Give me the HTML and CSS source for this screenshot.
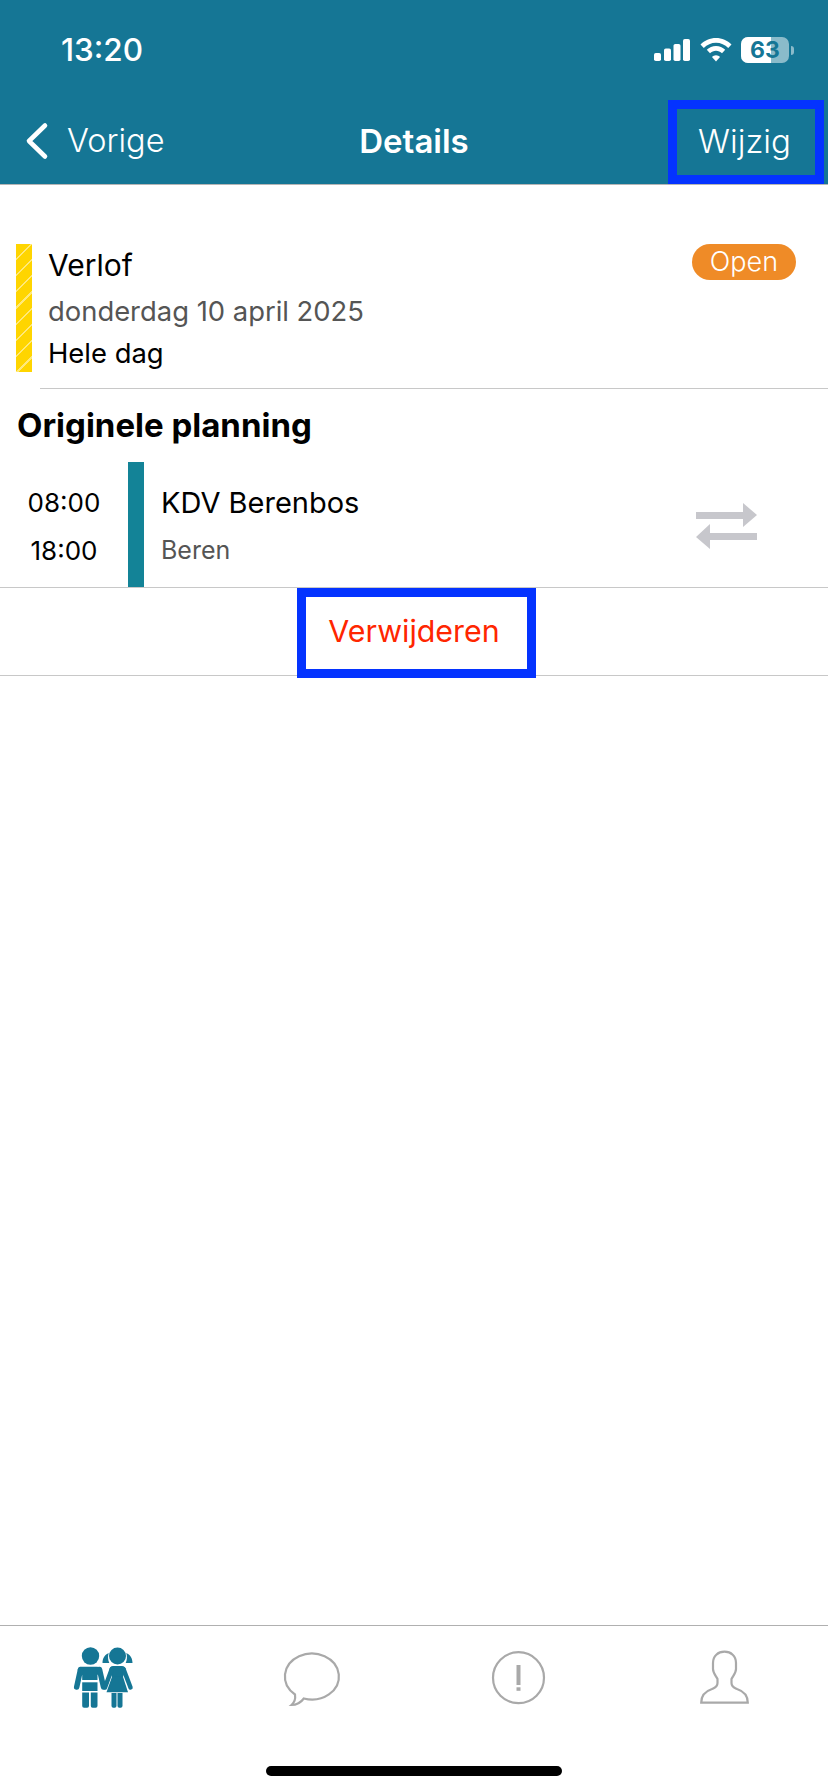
FILE: index.html
```html
<!DOCTYPE html>
<html lang="nl">
<head>
<meta charset="utf-8">
<title>Details</title>
<link rel="stylesheet" href="styles.css">
</head>
<body>
<div class="app">
  <header class="top">
    <div class="status">
      <span class="clock">13:20</span>
      <div class="status-icons">
        <svg class="signal" width="36" height="22" viewBox="0 0 36 22"><rect x="0" y="14" width="7" height="8" rx="1.8"/><rect x="10" y="9.500" width="7" height="12.500" rx="1.8"/><rect x="19.500" y="5" width="7" height="17" rx="1.8"/><rect x="29" y="0" width="7" height="22" rx="1.8"/></svg>
        <svg class="wifi" width="32" height="24" viewBox="0 0 32 24"><path d="M16 0C10 0 4.500 2.400.5 6.500L3.800 10C7 6.800 11.300 4.800 16 4.800S25 6.800 28.200 10L31.500 6.500C27.500 2.400 22 0 16 0Z"/><path d="M16 8C12.500 8 9.200 9.400 6.800 11.800L10 15.200C11.600 13.700 13.700 12.800 16 12.800S20.400 13.700 22 15.200L25.200 11.800C22.800 9.400 19.500 8 16 8Z"/><path d="M16 23.500L12 19C13 18 14.400 17.300 16 17.300S19 18 20 19Z"/></svg>
        <div class="battery"><span class="battery-fill"></span><span class="battery-num">63</span></div>
        <span class="battery-nub"></span>
      </div>
    </div>
    <nav class="nav">
      <a class="back">
        <svg width="26" height="38" viewBox="0 0 26 38"><path d="M22 3.500 L6 19 L22 34.500" fill="none" stroke="#fff" stroke-width="4.600" stroke-linecap="round" stroke-linejoin="round"/></svg>
        <span>Vorige</span>
      </a>
      <h1 class="nav-title">Details</h1>
      <a class="edit">Wijzig</a>
    </nav>
  </header>

  <main class="content">
    <section class="leave">
      <div class="stripe"></div>
      <div class="leave-text">
        <div class="leave-title">Verlof</div>
        <div class="leave-date">donderdag 10 april 2025</div>
        <div class="leave-span">Hele dag</div>
      </div>
      <span class="pill">Open</span>
    </section>
    <hr class="rule">
    <h2 class="section-title">Originele planning</h2>
    <section class="shift">
      <div class="times"><span>08:00</span><span>18:00</span></div>
      <div class="bar"></div>
      <div class="shift-text">
        <span class="shift-place">KDV Berenbos</span>
        <span class="shift-group">Beren</span>
      </div>
      <svg class="swap" width="61" height="46" viewBox="0 0 61 46"><path d="M0 9h47V0l14 12-14 12v-8H0z"/><path d="M61 30H14v-9L0 34l14 12v-9h47z"/></svg>
    </section>
    <div class="action"><a class="delete">Verwijderen</a></div>
  </main>

  <footer class="tabs">
    <div class="tab">
      <svg width="80" height="70" viewBox="0 0 80 70">
        <g fill="#157695">
          <circle cx="26.500" cy="11" r="8.700"/>
          <circle cx="53.500" cy="11" r="8.500"/>
          <path d="M38.500 18C38.500 13 41 9.500 44.700 8C43.700 11 43.800 15 45.300 18Z"/>
          <path d="M68.500 18C68.500 13 66 9.500 62.300 8C63.300 11 63.200 15 61.700 18Z"/>
          <path d="M18 21.700H33C36 21.700 37.500 23 38.200 25L33.500 30V35H18.200V30L13.500 25C14.500 23 15.500 21.700 18 21.700Z"/>
          <path d="M18.200 37.300H33.500V46H18.200Z"/>
          <path d="M18.200 47.500H25V60.700A1.900 1.900 0 0 1 23.100 62.700H20.100A1.900 1.900 0 0 1 18.200 60.700Z"/>
          <path d="M26.800 47.500H33.500V60.700A1.900 1.900 0 0 1 31.600 62.700H28.700A1.900 1.900 0 0 1 26.800 60.700Z"/>
          <path d="M49 21H58C60 21 61.500 22.500 61.500 24.500L59 32H48L45.500 24.500C45.500 22.500 47 21 49 21Z"/>
          <path d="M48 31.700L42.500 47.300H64L59 31.700Z"/>
          <path d="M47.500 48H52.500V61A1.800 1.800 0 0 1 50.700 62.700H49.300A1.800 1.800 0 0 1 47.500 61Z"/>
          <path d="M53.500 48H58.500V61A1.800 1.800 0 0 1 56.700 62.700H55.300A1.800 1.800 0 0 1 53.500 61Z"/>
        </g>
        <g fill="none" stroke="#157695" stroke-width="5.500" stroke-linecap="round">
          <path d="M16.500 24.500L12.700 42"/>
          <path d="M35.500 24.500L39.500 42"/>
          <path d="M47.800 24L41 42.500" stroke-width="4.500"/>
          <path d="M59.500 24L66.500 42.500" stroke-width="4.500"/>
        </g>
      </svg>
    </div>
    <div class="tab">
      <svg width="80" height="70" viewBox="0 0 80 70"><path class="tab-line" d="M32.800 53.500A27 23 0 1 0 24 49.500Q25 56 20.500 60Q28 60 32.800 53.500Z"/></svg>
    </div>
    <div class="tab">
      <svg width="80" height="70" viewBox="0 0 80 70"><circle class="tab-line" cx="40.500" cy="32.700" r="25.500"/><rect class="tab-fill" x="38.500" y="20" width="4" height="20"/><rect class="tab-fill" x="38.500" y="42.300" width="4" height="3.500"/></svg>
    </div>
    <div class="tab">
      <svg width="80" height="70" viewBox="0 0 80 70"><path class="tab-line" d="M39.500 6.700C46 6.700 51 11 51 18V24C51 28 48 31 46.500 34V38C46.500 42 49 42.500 52 44C58 46 62.800 50 62.800 57.700H16.200C16.200 50 21 46 27 44C30 42.500 32.500 42 32.500 38V34C31 31 28 28 28 24V18C28 11 33 6.700 39.500 6.700Z"/></svg>
    </div>
    <div class="home-indicator"></div>
  </footer>
</div>
</body>
</html>
```

FILE: styles.css
```css
* { box-sizing: border-box; }
html, body { margin: 0; padding: 0; background: #fff; }
body { font-family: Inter, "Noto Sans", "Liberation Sans", sans-serif; color: #000; }

.app { width: 828px; height: 1792px; display: flex; flex-direction: column; overflow: hidden; }

.top { background: #157695; color: #fff; border-bottom: 1px solid #b5b5b5; height: 185px; }
.status { height: 100px; padding: 0 34px 0 61px; display: flex; align-items: center; justify-content: space-between; }
.clock { font-size: 31.500px; font-weight: 500; line-height: 100px; }
.status-icons { display: flex; align-items: center; }
.signal, .wifi { fill: #fff; display: block; }
.wifi { margin-left: 10px; }
.battery { position: relative; width: 48px; height: 26px; margin-left: 9px; border-radius: 7px; background: rgba(255,255,255,.5); overflow: hidden; text-align: center; font-size: 23px; line-height: 26px; font-weight: 700; color: #157695; }
.battery-fill { position: absolute; left: 0; top: 0; bottom: 0; width: 30px; background: #fff; }
.battery-num { position: relative; }
.battery-nub { width: 3px; height: 9px; margin-left: 2px; border-radius: 0 3px 3px 0; background: rgba(255,255,255,.5); }

.nav { height: 84px; display: grid; grid-template-columns: 1fr auto 1fr; align-items: center; }
.back { display: flex; align-items: center; gap: 18px; padding: 0 0 3px 23px; font-size: 32.500px; font-weight: 300; }
.back svg { display: block; }
.nav-title { margin: 0; padding-bottom: 2px; font-size: 33px; font-weight: 600; line-height: 82px; }
.edit { justify-self: end; width: 156px; height: 84px; margin-right: 4px; padding: 0 3px 3px 0; border: 9px solid #0433ff; display: flex; align-items: center; justify-content: center; font-size: 33px; font-weight: 300; }

.content { flex: 1; }

.leave { display: flex; align-items: stretch; margin-top: 59px; padding-left: 16px; padding-right: 32px; height: 144px; }
.stripe { width: 16px; height: 128px; background: repeating-linear-gradient(135deg, #ffd500 0, #ffd500 10px, #ffe97a 10px, #ffe97a 11.500px); }
.leave-text { flex: 1; padding-left: 17px; }
.leave-title { font-size: 30px; line-height: 40px; padding-top: 1px; margin-left: -1px; }
.leave-date { font-size: 27.400px; line-height: 48px; margin-top: 2px; margin-bottom: 1px; margin-left: -1px; color: #555; }
.leave-span { font-size: 27.400px; line-height: 34px; margin-left: -1px; }
.pill { align-self: flex-start; width: 104px; height: 36px; border-radius: 18px; background: #ef8b27; color: #fff; text-align: center; font-size: 27px; line-height: 36px; font-weight: 300; }

.rule { margin: 0 0 0 40px; height: 1px; border: 0; background: #c8c8c8; }
.section-title { margin: 0; padding: 17px 0 0 17px; height: 73px; font-size: 33px; font-weight: 700; line-height: 38px; }

.shift { display: flex; align-items: stretch; height: 126px; border-bottom: 1px solid #c8c8c8; }
.times { width: 128px; display: flex; flex-direction: column; align-items: center; padding-top: 17px; font-size: 26px; line-height: 48px; }
.bar { width: 16px; background: #138397; }
.shift-text { flex: 1; display: flex; flex-direction: column; padding: 18px 0 0 17px; }
.shift-place { font-size: 29px; line-height: 46px; }
.shift-group { font-size: 25px; line-height: 48px; color: #555; }
.swap { fill: #c7c7cc; align-self: center; margin-right: 71px; margin-top: 2px; display: block; }

.action { height: 90px; display: flex; justify-content: center; position: relative; }
.action::after { content: ""; position: absolute; left: 0; right: 0; bottom: 2px; height: 1px; background: #c8c8c8; }
.delete { position: relative; z-index: 1; width: 239px; height: 90px; margin-left: 5px; padding: 0 5px 4px 0; border: 9px solid #0433ff; background: #fff; color: #ff2600; font-size: 30.400px; display: flex; align-items: center; justify-content: center; }

.tabs { position: relative; height: 167px; border-top: 1px solid #b0b0b0; padding-top: 19px; display: grid; grid-template-columns: repeat(4, 1fr); align-items: start; justify-items: center; }
.tab svg { display: block; }
.tab-line { fill: none; stroke: #a9a9a9; stroke-width: 2.200; }
.tab-fill { fill: #a9a9a9; }
.home-indicator { position: absolute; left: 266px; top: 140px; width: 296px; height: 10px; border-radius: 5px; background: #000; }
```
